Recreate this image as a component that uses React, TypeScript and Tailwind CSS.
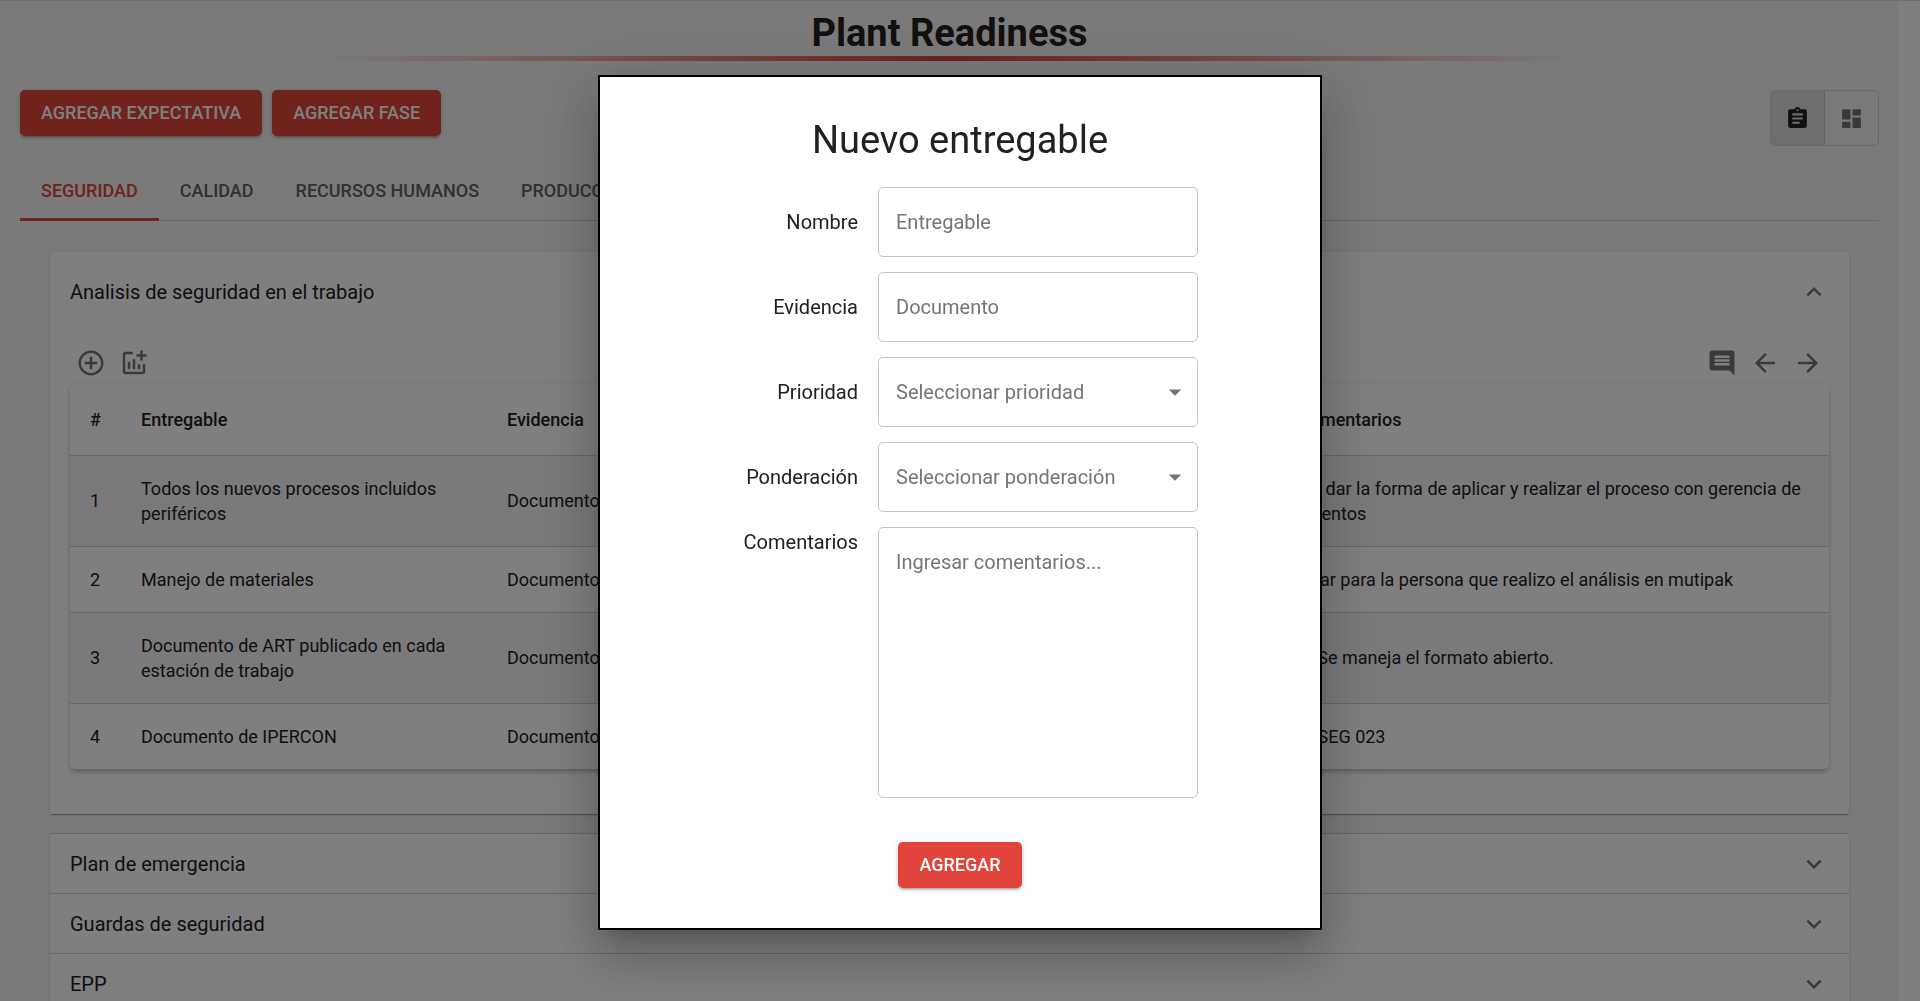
import React from 'react';
import {
  MdAddCircleOutline,
  MdArrowBack,
  MdArrowDropDown,
  MdArrowForward,
  MdAssignment,
  MdComment,
  MdDashboard,
  MdExpandLess,
  MdExpandMore,
  MdOutlineAddchart,
} from 'react-icons/md';

const tabs = ['Seguridad', 'Calidad', 'Recursos humanos', 'Producción', 'Mantenimiento', 'Logística'];

const entregables = [
  {
    nombre: 'Todos los nuevos procesos incluidos periféricos',
    evidencia: 'Documento',
    prioridad: 'Alta',
    comentarios: 'No dar la forma de aplicar y realizar el proceso con gerencia de asientos',
  },
  {
    nombre: 'Manejo de materiales',
    evidencia: 'Documento',
    prioridad: 'Alta',
    comentarios: 'Citar para la persona que realizo el análisis en mutipak',
  },
  {
    nombre: 'Documento de ART publicado en cada estación de trabajo',
    evidencia: 'Documento',
    prioridad: 'Media',
    comentarios: '1. Se maneja el formato abierto.',
  },
  {
    nombre: 'Documento de IPERCON',
    evidencia: 'Documento',
    prioridad: 'Media',
    comentarios: 'IT SEG 023',
  },
];

const expectativas = ['Plan de emergencia', 'Guardas de seguridad', 'EPP'];

const RedButton: React.FC<{ children: React.ReactNode; type?: 'button' | 'submit' }> = ({ children, type = 'button' }) => (
  <button
    type={type}
    className="h-[46px] px-[21px] rounded-[5px] bg-[#e0443a] text-white text-lg font-medium uppercase shadow-[0_4px_2px_-3px_rgba(0,0,0,0.2),0_2px_3px_0_rgba(0,0,0,0.14),0_1px_6px_0_rgba(0,0,0,0.12)]"
  >
    {children}
  </button>
);

const IconButton: React.FC<{ label: string; children: React.ReactNode }> = ({ label, children }) => (
  <button type="button" aria-label={label} className="flex size-10 items-center justify-center text-[30px] text-[#757575]">
    {children}
  </button>
);

const Header: React.FC = () => (
  <header className="pt-[10px]">
    <h1 className="text-[38px] leading-[45px] font-bold text-center text-[#212121]">Plant Readiness</h1>
    <div className="mx-auto h-[5px] w-2/3 bg-[linear-gradient(90deg,transparent,#e0443a,transparent)]" />
  </header>
);

const Tabs: React.FC = () => (
  <nav className="mx-5 mt-[15px] flex border-b border-[#d0d0d0]">
    {tabs.map((tab, i) => (
      <button
        key={tab}
        type="button"
        className={
          i === 0
            ? '-mb-px h-[60px] px-[21px] pt-[2px] text-lg font-medium uppercase border-b-3 border-[#e0443a] text-[#e0443a]'
            : '-mb-px h-[60px] px-[21px] pt-[2px] text-lg font-medium uppercase border-b-3 border-transparent text-[#626262]'
        }
      >
        {tab}
      </button>
    ))}
  </nav>
);

const EntregablesTable: React.FC = () => (
  <div className="overflow-hidden rounded-[5px] bg-white shadow-[0_4px_4px_-2px_rgba(0,0,0,0.1),0_4px_5px_0_rgba(0,0,0,0.1),0_1px_6px_0_rgba(0,0,0,0.1)]">
    <table className="w-full table-fixed border-collapse text-left text-lg leading-[25px] text-[#212121]">
      <thead>
        <tr className="h-[71px] border-b border-[#d0d0d0]">
          <th className="w-[51px] pl-5 font-medium">#</th>
          <th className="w-[366px] px-5 font-medium">Entregable</th>
          <th className="px-5 font-medium">Evidencia</th>
          <th className="px-5 font-medium">Prioridad</th>
          <th className="w-[551px] pl-5 pr-4 font-medium">Comentarios</th>
        </tr>
      </thead>
      <tbody>
        {entregables.map((item, i) => (
          <tr key={item.nombre} className="border-b border-[#d0d0d0] odd:bg-[#f5f5f5] last:border-b-0">
            <td className="py-5 pl-5">{i + 1}</td>
            <td className="p-5">{item.nombre}</td>
            <td className="p-5">{item.evidencia}</td>
            <td className="p-5">{item.prioridad}</td>
            <td className="py-5 pl-5 pr-4">{item.comentarios}</td>
          </tr>
        ))}
      </tbody>
    </table>
  </div>
);

const SelectField: React.FC<{ id: string; placeholder: string; options: string[] }> = ({ id, placeholder, options }) => (
  <div className="relative">
    <select id={id} defaultValue="" className="h-[70px] w-full appearance-none rounded-[5px] border border-[#c4c4c4] bg-white px-[17px] text-xl text-[#757575]">
      <option value="" disabled>{placeholder}</option>
      {options.map((option) => (
        <option key={option}>{option}</option>
      ))}
    </select>
    <MdArrowDropDown className="pointer-events-none absolute right-2 top-5 size-[30px] text-[#757575]" />
  </div>
);

const NuevoEntregable: React.FC = () => (
  <div className="fixed inset-0 flex items-center justify-center bg-black/50 pt-1">
    <form
      role="dialog"
      aria-labelledby="titulo-modal"
      className="w-[724px] border-2 border-black bg-white px-10 pt-[41px] pb-10 shadow-[0_14px_19px_-9px_rgba(0,0,0,0.2),0_30px_48px_4px_rgba(0,0,0,0.14),0_11px_58px_10px_rgba(0,0,0,0.12)]"
    >
      <h2 id="titulo-modal" className="text-[38px] leading-[45px] text-center">Nuevo entregable</h2>
      <div className="mt-6 grid grid-cols-[218px_320px] items-center gap-x-5 gap-y-[15px] text-xl leading-[30px] text-[#212121]">
        <label htmlFor="nombre" className="text-right">Nombre</label>
        <input id="nombre" type="text" placeholder="Entregable" className="h-[70px] rounded-[5px] border border-[#c4c4c4] px-[17px] placeholder:text-[#757575]" />

        <label htmlFor="evidencia" className="text-right">Evidencia</label>
        <input id="evidencia" type="text" placeholder="Documento" className="h-[70px] rounded-[5px] border border-[#c4c4c4] px-[17px] placeholder:text-[#757575]" />

        <label htmlFor="prioridad" className="text-right">Prioridad</label>
        <SelectField id="prioridad" placeholder="Seleccionar prioridad" options={['Alta', 'Media', 'Baja']} />

        <label htmlFor="ponderacion" className="text-right">Ponderación</label>
        <SelectField id="ponderacion" placeholder="Seleccionar ponderación" options={['1', '2', '3']} />

        <label htmlFor="comentarios" className="self-start text-right">Comentarios</label>
        <textarea id="comentarios" placeholder="Ingresar comentarios..." className="h-[271px] resize-none rounded-[5px] border border-[#c4c4c4] px-[17px] py-[19px] placeholder:text-[#757575]" />
      </div>
      <div className="mt-11 flex justify-center">
        <RedButton type="submit">Agregar</RedButton>
      </div>
    </form>
  </div>
);

const App: React.FC = () => {
  return (
    <div className="h-screen overflow-hidden border-t border-[#dcdcdc] bg-white pr-[21px] font-[Roboto,sans-serif] text-[#212121]">
      <main className="min-h-full bg-[#f5f5f5]">
        <Header />

        {/* Acciones y cambio de vista */}
        <div className="mx-5 mt-[29px] flex items-start justify-between">
          <div className="flex gap-[10px]">
            <RedButton>Agregar expectativa</RedButton>
            <RedButton>Agregar fase</RedButton>
          </div>
          <div className="flex overflow-hidden rounded-[5px] border border-[#d0d0d0] text-[25px]">
            <button type="button" aria-label="Lista" className="flex h-[54px] w-[54px] items-center justify-center border-r border-[#c4c4c4] bg-[#dcdcdc] text-[#212121]">
              <MdAssignment />
            </button>
            <button type="button" aria-label="Tablero" className="flex h-[54px] w-[53px] items-center justify-center text-[#757575]">
              <MdDashboard />
            </button>
          </div>
        </div>

        <Tabs />

        {/* Expectativa abierta */}
        <section className="mx-[50px] mt-[31px] rounded-t-[5px] bg-white px-5 pb-[45px] shadow-[0_3px_1px_-2px_rgba(0,0,0,0.2),0_1px_1px_0_rgba(0,0,0,0.14),0_1px_4px_0_rgba(0,0,0,0.12)]">
          <button type="button" className="flex h-20 w-full items-center justify-between text-xl">
            Analisis de seguridad en el trabajo
            <MdExpandLess className="size-[30px] text-[#757575]" />
          </button>
          <div className="flex justify-between pt-[11px] pb-px">
            <div className="flex gap-[3px] pl-px">
              <IconButton label="Agregar entregable"><MdAddCircleOutline /></IconButton>
              <IconButton label="Agregar gráfica"><MdOutlineAddchart /></IconButton>
            </div>
            <div className="flex gap-[3px] pr-px">
              <IconButton label="Comentarios"><MdComment /></IconButton>
              <IconButton label="Anterior"><MdArrowBack /></IconButton>
              <IconButton label="Siguiente"><MdArrowForward /></IconButton>
            </div>
          </div>
          <EntregablesTable />
        </section>

        {/* Expectativas cerradas */}
        <section className="mx-[50px] mt-[19px] bg-white shadow-[0_1px_4px_0_rgba(0,0,0,0.12)]">
          {expectativas.map((titulo) => (
            <button key={titulo} type="button" className="flex h-[60px] w-full items-center justify-between border-t border-[#d0d0d0] px-5 pt-px text-xl">
              {titulo}
              <MdExpandMore className="size-[30px] text-[#757575]" />
            </button>
          ))}
        </section>
      </main>

      <NuevoEntregable />
    </div>
  );
};

export default App;
